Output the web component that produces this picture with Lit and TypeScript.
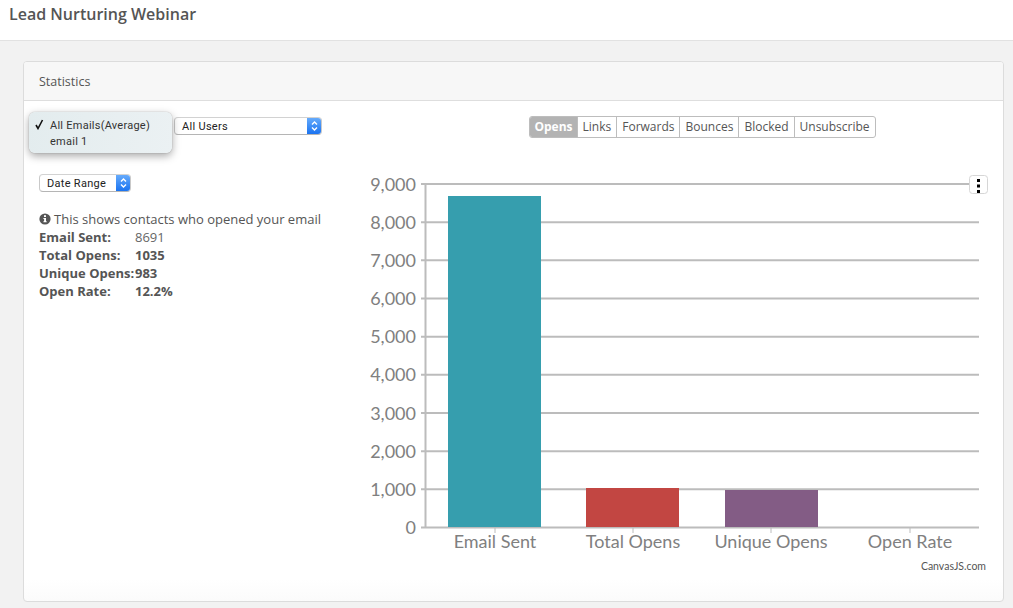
import { LitElement, html, css, svg } from "lit";
import { customElement } from "lit/decorators.js";

const TICKS = [0, 1000, 2000, 3000, 4000, 5000, 6000, 7000, 8000, 9000];
const BARS = [
  { label: "Email Sent", x: 448, top: 196, color: "#369eae", tick: 495 },
  { label: "Total Opens", x: 586, top: 488, color: "#c24642", tick: 633 },
  { label: "Unique Opens", x: 725, top: 490, color: "#835c85", tick: 771 },
  { label: "Open Rate", x: 864, top: 527, color: "#7f6084", tick: 910 },
];
const TABS = ["Opens", "Links", "Forwards", "Bounces", "Blocked", "Unsubscribe"];
const STATS = [
  ["Email Sent:", "8691", false],
  ["Total Opens:", "1035", true],
  ["Unique Opens:", "983", true],
  ["Open Rate:", "12.2%", true],
] as const;

const tickY = (v: number) => 527.5 - (v / 9000) * 343.5;

@customElement("app-root")
export class AppRoot extends LitElement {
  static styles = css`
    :host { display: block; width: 1013px; height: 608px; overflow: hidden; background: #f2f2f2; font-family: "Open Sans", sans-serif; color: #555; }
    .top { height: 40px; background: #fff; border-bottom: 1px solid #e2e2e2; padding-left: 9px; display: flex; align-items: flex-start; }
    .top h1 { margin: 3px 0 0; font-size: 16px; line-height: 22px; font-weight: 600; color: #555; white-space: nowrap; }
    .card { margin: 20px 9px 0 23px; height: 541px; box-sizing: border-box; border: 1px solid #dcdcdc; border-radius: 4px; background: linear-gradient(to bottom, #fff 96%, #fbfbfb 100%); display: flex; flex-direction: column; overflow: hidden; }
    .card-head { height: 39px; flex: none; box-sizing: border-box; background: #f7f7f7; border-bottom: 1px solid #dedede; padding-left: 15px; font-size: 12.5px; line-height: 39px; color: #555; }
    .card-body { flex: 1; display: grid; grid-template-columns: 336px 644px; }
    .left { position: relative; padding: 16px 0 0 15px; }
    .filters { display: flex; padding-left: 135px; height: 18px; }
    .select { box-sizing: border-box; height: 18px; display: flex; align-items: stretch; background: #fff; border: 1px solid #c9c9c9; border-top-color: #d2d2d2; border-bottom-color: #b5b5b5; border-radius: 4px; font-family: Roboto, sans-serif; font-size: 11px; line-height: 17px; color: #222; letter-spacing: 0.3px; overflow: hidden; }
    .select span { flex: 1; padding-left: 7px; }
    .stepper { flex: none; width: 15px; margin: -1px -1px -1px 0; background: linear-gradient(to bottom, #6aaefc, #1670f0); display: flex; align-items: center; justify-content: center; }
    .users { width: 148px; }
    .range { width: 92px; margin-top: 39px; }
    .menu { position: absolute; left: 5px; top: 11px; width: 143px; height: 41px; box-sizing: border-box; padding: 6px 0 0 21px; border-radius: 6px; background: linear-gradient(100deg, #e3ecee, #ebf1f3); box-shadow: 0 0 1px rgba(0,0,0,.45), 0 3px 8px rgba(0,0,0,.35); font-family: Roboto, sans-serif; font-size: 11px; line-height: 16px; color: #333; letter-spacing: 0.25px; }
    .menu svg { position: absolute; left: 5px; top: 7px; }
    .menu div { white-space: nowrap; }
    .note { display: flex; align-items: center; gap: 3px; margin-top: 18px; font-size: 13px; line-height: 18px; white-space: nowrap; color: #555; }
    .stats { font-size: 13px; line-height: 18px; color: #555; }
    .row { display: grid; grid-template-columns: 96px auto; white-space: nowrap; }
    .row b { font-weight: 700; }
    .row i { font-style: normal; color: #666; }
    .right { display: flex; flex-direction: column; }
    .tabs-wrap { display: flex; justify-content: center; padding: 15px 0 0 41px; height: 22px; margin-bottom: 32px; }
    .tabs { display: flex; border: 1px solid #bdbdbd; border-radius: 3px; overflow: hidden; box-sizing: border-box; height: 22px; }
    .tab { padding: 0 5px; font-size: 12px; line-height: 20px; color: #555; border-left: 1px solid #bdbdbd; white-space: nowrap; }
    .tab:first-child { border-left: 0; }
    .tab.on { background: #b3b3b3; color: #fff; font-weight: 700; padding: 0 4px; }
    .chart { display: block; }
    .ax { font-family: Lato, sans-serif; font-size: 18px; fill: #808080; }
    .credit { font-family: Lato, sans-serif; font-size: 10.5px; fill: #555; }
  `;

  private stepper() {
    return html`<div class="stepper"><svg width="9" height="12" viewBox="0 0 9 12"><path d="M2 4.5 4.5 2 7 4.5M2 7.5 4.5 10 7 7.5" fill="none" stroke="#fff" stroke-width="1.4"/></svg></div>`;
  }

  private chart() {
    return html`<svg class="chart" width="644" height="410" viewBox="360 170 644 410">
      ${TICKS.map((t) => svg`
        <line x1="421" x2="979" y1=${tickY(t)} y2=${tickY(t)} stroke="#bcbcbc" stroke-width="2"/>
        <text class="ax" x="416" y=${tickY(t) + 6.5} text-anchor="end">${t.toLocaleString("en-US")}</text>`)}
      <line x1="425.5" x2="425.5" y1="183" y2="528" stroke="#bcbcbc" stroke-width="2"/>
      ${BARS.map((b) => svg`
        <rect x=${b.x} y=${b.top} width="93" height=${527 - b.top} fill=${b.color}/>
        <line x1=${b.tick} x2=${b.tick} y1="528" y2="533" stroke="#bcbcbc" stroke-width="1"/>
        <text class="ax" x=${b.tick} y="548" text-anchor="middle">${b.label}</text>`)}
      <rect x="969.5" y="175.5" width="18" height="18" rx="3" fill="#fff" stroke="#d6d6d6"/>
      <rect x="977" y="179" width="3" height="3" fill="#000"/>
      <rect x="977" y="184.5" width="3" height="3" fill="#000"/>
      <rect x="977" y="190" width="3" height="3" fill="#000"/>
      <text class="credit" x="986" y="570" text-anchor="end">CanvasJS.com</text>
    </svg>`;
  }

  render() {
    return html`
      <div class="top"><h1>Lead Nurturing Webinar</h1></div>
      <div class="card">
        <div class="card-head">Statistics</div>
        <div class="card-body">
          <div class="left">
            <div class="filters"><div class="select users"><span>All Users</span>${this.stepper()}</div></div>
            <div class="select range"><span>Date Range</span>${this.stepper()}</div>
            <div class="note">
              <svg width="12" height="12" viewBox="0 0 12 12"><circle cx="6" cy="6" r="5.6" fill="#555"/><rect x="5" y="2.2" width="2" height="1.8" fill="#fff"/><path d="M4.4 5h2.6v3.3h.7v1H4.4v-1h.7V6h-.7z" fill="#fff"/></svg>
              This shows contacts who opened your email
            </div>
            <div class="stats">
              ${STATS.map(([k, v, strong]) => html`<div class="row"><b>${k}</b>${strong ? html`<b>${v}</b>` : html`<i>${v}</i>`}</div>`)}
            </div>
            <div class="menu">
              <svg width="11" height="11" viewBox="0 0 11 11"><path d="M2 6 4 9.5 8.5 1" fill="none" stroke="#111" stroke-width="1.6"/></svg>
              <div>All Emails(Average)</div>
              <div>email 1</div>
            </div>
          </div>
          <div class="right">
            <div class="tabs-wrap"><div class="tabs">${TABS.map((t, i) => html`<div class="tab ${i === 0 ? "on" : ""}">${t}</div>`)}</div></div>
            ${this.chart()}
          </div>
        </div>
      </div>
    `;
  }
}
